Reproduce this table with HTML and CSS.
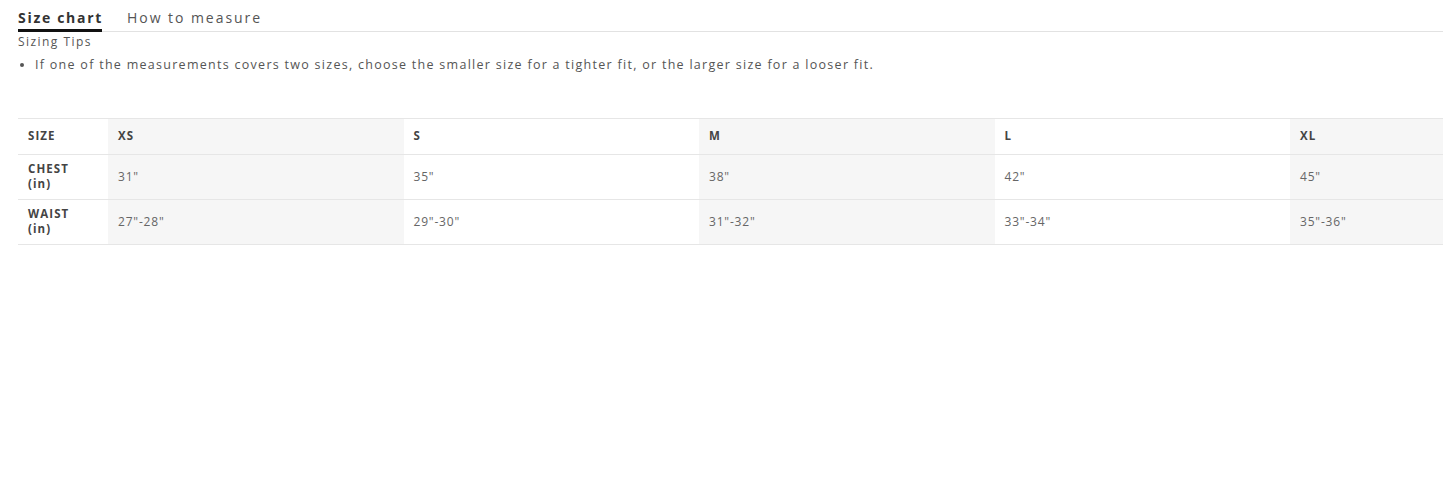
FILE: index.html
```html
<!DOCTYPE html>
<html lang="en">
<head>
<meta charset="utf-8">
<title>Size chart</title>
<link rel="stylesheet" href="styles.css">
</head>
<body>
<div class="page">
  <nav class="tabs">
    <span class="tab active">Size chart</span>
    <span class="tab">How to measure</span>
  </nav>
  <div class="tips-title">Sizing Tips</div>
  <ul class="tips">
    <li>If one of the measurements covers two sizes, choose the smaller size for a tighter fit, or the larger size for a looser fit.</li>
  </ul>
  <table class="chart">
    <colgroup>
      <col class="c-label"><col class="c-size"><col class="c-size"><col class="c-size"><col class="c-size"><col class="c-size">
    </colgroup>
    <thead>
      <tr>
        <th class="label">SIZE</th>
        <th class="shade">XS</th>
        <th>S</th>
        <th class="shade">M</th>
        <th>L</th>
        <th class="shade">XL</th>
      </tr>
    </thead>
    <tbody>
      <tr>
        <th class="label">CHEST<br>(in)</th>
        <td class="shade">31"</td>
        <td>35"</td>
        <td class="shade">38"</td>
        <td>42"</td>
        <td class="shade">45"</td>
      </tr>
      <tr>
        <th class="label">WAIST<br>(in)</th>
        <td class="shade">27"-28"</td>
        <td>29"-30"</td>
        <td class="shade">31"-32"</td>
        <td>33"-34"</td>
        <td class="shade">35"-36"</td>
      </tr>
    </tbody>
  </table>
</div>
</body>
</html>
```

FILE: styles.css
```css
html, body {
  margin: 0;
  padding: 0;
  background: #fff;
}
body {
  font-family: "Open Sans", "Liberation Sans", sans-serif;
  color: #555;
  overflow: hidden;
}
.page {
  padding-left: 18px;
  overflow: hidden;
}
.tabs {
  display: flex;
  gap: 25px;
  border-bottom: 1px solid #e2e2e2;
  height: 32px;
  box-sizing: border-box;
}
.tab {
  font-size: 14px;
  letter-spacing: 1.95px;
  line-height: 14px;
  padding-top: 11px;
  color: #555;
  white-space: nowrap;
}
.tab.active {
  font-weight: 700;
  color: #333;
  border-bottom: 3px solid #111;
  height: 18px;
  width: 84px;
  letter-spacing: 1.7px;
}
.tips-title {
  font-size: 12px;
  letter-spacing: 1.45px;
  line-height: 16px;
  margin-top: 2px;
  color: #555;
}
.tips {
  margin: 6px 0 0 0;
  padding: 0 0 0 17px;
  font-size: 12.5px;
  letter-spacing: 1.28px;
  line-height: 18px;
  color: #555;
}
.tips li::marker {
  font-size: 11px;
}
.chart {
  margin-top: 44px;
  border-collapse: collapse;
  table-layout: fixed;
  width: 1567.5px;
  border-top: 1px solid #e6e6e6;
}
.c-label { width: 90px; }
.c-size { width: 295.5px; }
.chart th, .chart td {
  text-align: left;
  padding: 0 10px;
  border-bottom: 1px solid #e6e6e6;
  vertical-align: middle;
}
.chart thead th {
  height: 33px;
  font-size: 11.5px;
  font-weight: 700;
  letter-spacing: 1.1px;
  color: #444;
  padding-bottom: 2px;
}
.chart tbody tr { height: 45px; }
.chart tbody th {
  font-size: 11.5px;
  font-weight: 700;
  letter-spacing: 1.1px;
  line-height: 15px;
  color: #444;
  padding-bottom: 3px;
}
.chart td {
  font-size: 12px;
  letter-spacing: 0.8px;
  color: #666;
  padding-bottom: 2px;
}
.chart .shade {
  background: #f6f6f6;
}
```
